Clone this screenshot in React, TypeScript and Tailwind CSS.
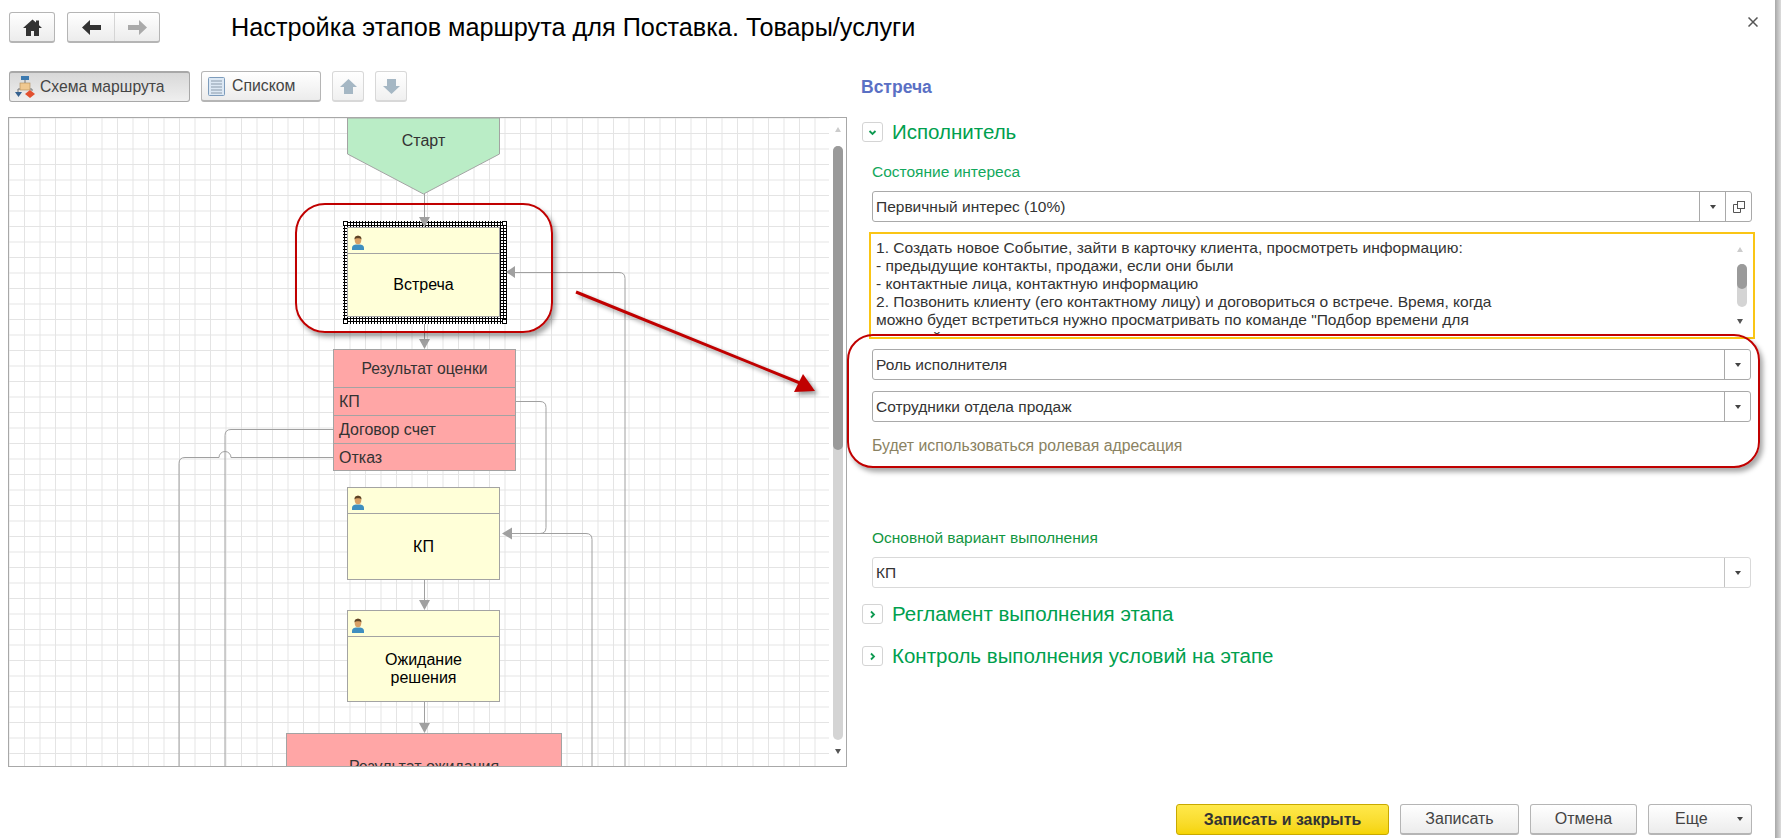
import type { ReactNode } from "react";

function PersonIcon() {
  return (
    <svg width="14" height="16" viewBox="0 0 14 16" className="absolute left-[3px] top-[7px]">
      <path d="M1 15v-2.500C1 10.500 3.500 9.500 5 9.500h4c1.500 0 4 1 4 3V15z" fill="#3f8fc0" />
      <ellipse cx="7" cy="5" rx="3.300" ry="4.200" fill="#d9a066" />
      <path d="M3.500 4.500C3.500 1.500 5 .8 7 .8s3.500.7 3.500 3.700C9.500 2.800 4.500 2.800 3.500 4.500z" fill="#5c4326" />
    </svg>
  );
}

function DownTriangle({ className = "" }: { className?: string }) {
  return <span className={`block w-0 h-0 border-l-[3.500px] border-r-[3.500px] border-t-[4px] border-l-transparent border-r-transparent border-t-[#444] ${className}`} />;
}

function ToolButton({ children, className = "" }: { children: ReactNode; className?: string }) {
  return (
    <div className={`h-[31px] flex items-center rounded-[3px] border border-[#b5b5b5] border-b-[2px] bg-gradient-to-b from-white to-[#ececec] ${className}`}>
      {children}
    </div>
  );
}

function Combo({ text, extra, light }: { text: string; extra?: boolean; light?: boolean }) {
  return (
    <div className={`h-[31px] flex items-stretch rounded-[3px] border bg-white ${light ? "border-[#d9d9d9]" : "border-[#a9a9a9]"}`}>
      <div className="flex-1 flex items-center pl-[3px] text-[15.500px] text-[#333]">{text}</div>
      <div className={`w-[26px] flex items-center justify-center border-l ${light ? "border-[#c4c4c4]" : "border-[#a9a9a9]"}`}>
        <DownTriangle />
      </div>
      {extra && (
        <div className="w-[26px] flex items-center justify-center border-l border-[#a9a9a9]">
          <svg width="12" height="12" viewBox="0 0 12 12" fill="none" stroke="#555" strokeWidth="1">
            <rect x="4.500" y="0.500" width="7" height="7" />
            <path d="M4.500 3.500H.5v8h7V7.500" />
          </svg>
        </div>
      )}
    </div>
  );
}

function GroupHeader({ text, open }: { text: string; open?: boolean }) {
  return (
    <div className="flex items-center h-[20px]">
      <div className="w-[21px] h-[20px] flex items-center justify-center rounded-[3px] border border-[#d4d4d4] bg-white">
        <svg width="9" height="9" viewBox="0 0 9 9" fill="none" stroke="#0f9a52" strokeWidth="1.800">
          {open ? <path d="M1.500 3l3 3 3-3" /> : <path d="M3 1.500l3 3-3 3" />}
        </svg>
      </div>
      <span className="ml-[9px] text-[20.500px] text-[#00a04e] whitespace-nowrap">{text}</span>
    </div>
  );
}

function StepNode({ title, top, height }: { title: ReactNode; top: number; height: number }) {
  return (
    <div
      className="absolute left-[338px] w-[153px] border border-[#a3a3a3] bg-[#ffffd8] flex flex-col"
      style={{ top, height }}
    >
      <div className="relative h-[26px] shrink-0 border-b border-[#a3a3a3]">
        <PersonIcon />
      </div>
      <div className="flex-1 flex items-center justify-center text-center text-[16px] leading-[18px] text-black">{title}</div>
    </div>
  );
}

function OutcomeRow({ text }: { text: string }) {
  return <div className="h-[28px] pl-[5px] flex items-center border-t border-[#a3a3a3] text-[16px] text-[#333]">{text}</div>;
}

function Handle({ className }: { className: string }) {
  return <span className={`absolute w-[5px] h-[5px] bg-white border border-black ${className}`} />;
}

function Diagram() {
  return (
    <div className="relative h-[650px] border border-[#a8a8a8] overflow-hidden bg-white">
      <div className="absolute left-0 top-0 bottom-0 w-[820px] bg-[linear-gradient(to_right,#e4e4e4_1px,transparent_1px),linear-gradient(to_bottom,#e4e4e4_1px,transparent_1px)] bg-[size:15.500px_15.500px] bg-[position:15px_15px]" />

      {/* connectors */}
      <svg width="838" height="650" className="absolute left-0 top-0" fill="none" stroke="#a0a0a0" strokeWidth="1">
        <path d="M415.500 76v30" />
        <path d="M415.500 206v20" />
        <path d="M415.500 461v25" />
        <path d="M415.500 584v25" />
        <path d="M500 154.500h110q6 0 6 6V650" />
        <path d="M507 283.500h24q6 0 6 6v120q0 6-6 6h-34" />
        <path d="M583 650V421.500q0-6-6-6h-80" />
        <path d="M324 311.500H222q-6 0-6 6V650" />
        <path d="M324 339.500H222a6 6 0 0 0-12 0h-34q-6 0-6 6V650" />
      </svg>

      {/* start */}
      <div className="absolute left-[338px] top-0 w-[153px] h-[77px]">
        <svg width="153" height="77" className="absolute inset-0">
          <path d="M.5 0v36L76.500 76 152.500 36V0z" fill="#baedc6" stroke="#a3a3a3" />
        </svg>
        <div className="absolute left-0 right-0 top-[11px] text-center text-[16px] text-[#333]">Старт</div>
      </div>

      {/* selected step */}
      <div className="absolute left-[334px] top-[103px] w-[164px] h-[103px] bg-white bg-[radial-gradient(#000_1px,transparent_1.200px)] bg-[size:3px_3px]">
        <Handle className="left-0 top-0" />
        <Handle className="right-0 top-0" />
        <Handle className="left-0 bottom-0" />
        <Handle className="right-0 bottom-0" />
      </div>
      <StepNode title="Встреча" top={109} height={90} />

      {/* outcome */}
      <div className="absolute left-[324px] top-[231px] w-[183px] h-[122px] bg-[#ffa6a6] border border-[#a3a3a3]">
        <div className="h-[37px] flex items-center justify-center text-[15.700px] text-[#333]">Результат оценки</div>
        <OutcomeRow text="КП" />
        <OutcomeRow text="Договор счет" />
        <OutcomeRow text="Отказ" />
      </div>

      <StepNode title="КП" top={369} height={93} />
      <StepNode title={<span>Ожидание<br />решения</span>} top={492} height={92} />

      <div className="absolute left-[277px] top-[615px] w-[276px] h-[60px] bg-[#ffa6a6] border border-[#a3a3a3] pt-[21px] text-center text-[16px] text-[#333]">
        Результат ожидания
      </div>

      {/* arrowheads lie over the nodes */}
      <svg width="838" height="650" className="absolute left-0 top-0" fill="#a0a0a0">
        <path d="M410 99h11l-5.500 10zM410 221h11l-5.500 10zM410 482h11l-5.500 10zM410 605h11l-5.500 10z" />
        <path d="M506 148v12l-9-6zM503 409.500v12l-10-6z" />
      </svg>

      {/* scrollbar */}
      <div className="absolute left-[826px] top-[9px] w-0 h-0 border-l-[3px] border-r-[3px] border-b-[5px] border-l-transparent border-r-transparent border-b-[#ccc]" />
      <div className="absolute left-[824px] top-[28px] w-[10px] h-[594px] rounded-[5px] bg-[#d4d4d4]">
        <div className="w-full h-[304px] rounded-[5px] bg-[#9a9a9a]" />
      </div>
      <div className="absolute left-[826px] top-[631px] w-0 h-0 border-l-[3px] border-r-[3px] border-t-[5px] border-l-transparent border-r-transparent border-t-[#555]" />
    </div>
  );
}

export default function App() {
  return (
    <div className="relative w-full h-[838px] flex bg-white overflow-hidden font-['Liberation_Sans',Arial,sans-serif]">
      <div className="flex-1 min-w-0 flex flex-col">
        {/* header */}
        <div className="h-[71px] shrink-0 flex items-start pt-[12px] pl-[9px]">
          <ToolButton className="w-[46px] justify-center">
            <svg width="19" height="17" viewBox="0 0 19 17" fill="#333">
              <path d="M9.500.5 0 9h3v8h5v-5h3v5h5V9h3l-3-2.700V1.500h-3v2z" />
            </svg>
          </ToolButton>
          <ToolButton className="ml-[12px] w-[93px]">
            <div className="w-[47px] h-full flex items-center justify-center border-r border-[#d5d5d5]">
              <svg width="19" height="15" viewBox="0 0 19 15" fill="#333">
                <path d="M0 7.500 8 0v5h11v5H8v5z" />
              </svg>
            </div>
            <div className="flex-1 flex items-center justify-center">
              <svg width="19" height="15" viewBox="0 0 19 15" fill="#aaa">
                <path d="M19 7.500 11 0v5H0v5h11v5z" />
              </svg>
            </div>
          </ToolButton>
          <h1 className="ml-[71px] text-[25.250px] leading-[30px] font-normal text-black whitespace-nowrap">
            Настройка этапов маршрута для Поставка. Товары/услуги
          </h1>
        </div>

        {/* body */}
        <div className="h-[733px] shrink-0 flex">
          <div className="w-[847px] shrink-0 pl-[8px]">
            <div className="flex items-start h-[46px] pl-px">
              <div className="h-[31px] w-[181px] flex items-center rounded-[3px] border border-[#a8a8a8] border-t-[2px] bg-gradient-to-b from-[#d8d8d8] to-[#efefef] text-[15.700px] text-[#444]">
                <svg width="20" height="22" viewBox="0 0 20 22" className="ml-[5px]">
                  <rect x="6" y="0" width="8" height="4" fill="#3d7ab0" />
                  <path d="M10 4v4" stroke="#777" />
                  <rect x="5" y="7" width="10" height="7" fill="#f0c890" stroke="#b08a58" strokeWidth=".6" />
                  <path d="M5 13H3v3M15 13h2v2" stroke="#777" fill="none" />
                  <path d="M0 16h7l-3.500 5z" fill="#35618f" />
                  <path d="M15 14l5 4-5 4-5-4z" fill="#e2502f" />
                </svg>
                <span className="ml-[5px]">Схема маршрута</span>
              </div>
              <ToolButton className="ml-[11px] w-[120px]">
                <svg width="17" height="19" viewBox="0 0 17 19" className="ml-[6px]">
                  <rect x=".5" y=".5" width="16" height="18" rx="1" fill="#dce8f4" stroke="#7d9cbc" />
                  <path d="M3 4h11M3 7h11M3 10h11M3 13h11M3 16h11" stroke="#8a9aaa" />
                </svg>
                <span className="ml-[7px] text-[15.800px] text-[#444]">Списком</span>
              </ToolButton>
              <div className="ml-[11px] w-[32px] h-[31px] flex items-center justify-center rounded-[3px] border border-[#d8d8d8] border-b-[2px] bg-gradient-to-b from-white to-[#f0f0f0]">
                <svg width="17" height="15" viewBox="0 0 17 15" fill="#a5b7c4">
                  <path d="M8.500 0 17 8h-4v7H4V8H0z" />
                </svg>
              </div>
              <div className="ml-[11px] w-[32px] h-[31px] flex items-center justify-center rounded-[3px] border border-[#d8d8d8] border-b-[2px] bg-gradient-to-b from-white to-[#f0f0f0]">
                <svg width="17" height="15" viewBox="0 0 17 15" fill="#a5b7c4">
                  <path d="M8.500 15 17 7h-4V0H4v7H0z" />
                </svg>
              </div>
            </div>
            <Diagram />
          </div>

          <div className="flex-1 min-w-0 pl-[15px] pr-[24px]">
            <div className="h-[32px] -ml-px flex items-center text-[17.500px] font-bold text-[#5a70c4]">Встреча</div>
            <div className="mt-[19px]">
              <GroupHeader text="Исполнитель" open />
            </div>
            <div className="pl-[10px]">
              <div className="mt-[20px] h-[20px] flex items-center text-[15.500px] text-[#12a85c]">Состояние интереса</div>
              <div className="mt-[9px] mr-[-1px]">
                <Combo text="Первичный интерес (10%)" extra />
              </div>
              <div className="relative mt-[10px] ml-[-3px] mr-[-4px] h-[107px] border-2 border-[#fac515] pl-[5px] text-[15.550px] leading-[18px] text-[#333]">
                <div className="h-[100px] pt-[5px] overflow-hidden">
                  <p className="whitespace-nowrap">1. Создать новое Событие, зайти в карточку клиента, просмотреть информацию:</p>
                  <p className="whitespace-nowrap">- предыдущие контакты, продажи, если они были</p>
                  <p className="whitespace-nowrap">- контактные лица, контактную информацию</p>
                  <p className="whitespace-nowrap">2. Позвонить клиенту (его контактному лицу) и договориться о встрече. Время, когда</p>
                  <p className="whitespace-nowrap">можно будет встретиться нужно просматривать по команде "Подбор времени для</p>
                  <p className="whitespace-nowrap">встречей</p>
                </div>
                <div className="absolute right-[10px] top-[13px] w-0 h-0 border-l-[3px] border-r-[3px] border-b-[5px] border-l-transparent border-r-transparent border-b-[#ccc]" />
                <div className="absolute right-[6px] top-[30px] w-[10px] h-[43px] rounded-[5px] bg-[#d4d4d4]">
                  <div className="h-[25px] rounded-[5px] bg-[#9a9a9a]" />
                </div>
                <div className="absolute right-[10px] top-[85px] w-0 h-0 border-l-[3px] border-r-[3px] border-t-[5px] border-l-transparent border-r-transparent border-t-[#555]" />
              </div>
              <div className="mt-[10px]">
                <Combo text="Роль исполнителя" />
              </div>
              <div className="mt-[11px]">
                <Combo text="Сотрудники отдела продаж" />
              </div>
              <div className="mt-[15px] h-[18px] flex items-center text-[15.800px] text-[#8a8262]">Будет использоваться ролевая адресация</div>
              <div className="mt-[74px] h-[18px] flex items-center text-[15.500px] text-[#12963f]">Основной вариант выполнения</div>
              <div className="mt-[10px]">
                <Combo text="КП" light />
              </div>
            </div>
            <div className="mt-[16px]">
              <GroupHeader text="Регламент выполнения этапа" />
            </div>
            <div className="mt-[22px]">
              <GroupHeader text="Контроль выполнения условий на этапе" />
            </div>
          </div>
        </div>

        {/* footer */}
        <div className="flex justify-end items-start pr-[23px] gap-[11px]">
          <div className="w-[213px] h-[31px] flex items-center justify-center rounded-[3px] border border-[#c8a900] bg-gradient-to-b from-[#ffe94a] to-[#f5d400] text-[15.900px] font-bold text-[#333]">
            Записать и закрыть
          </div>
          <ToolButton className="w-[119px] justify-center text-[16px] text-[#444]">Записать</ToolButton>
          <ToolButton className="w-[107px] justify-center text-[16px] text-[#444]">Отмена</ToolButton>
          <ToolButton className="w-[104px] text-[16px] text-[#444]">
            <span className="ml-[26px] flex-1">Еще</span>
            <DownTriangle className="mr-[8px]" />
          </ToolButton>
        </div>
      </div>

      {/* window edge */}
      <div className="w-[6px] shrink-0 bg-gradient-to-r from-[#a8a8a8] to-[#dcdcdc]" />

      {/* close */}
      <svg width="10" height="10" viewBox="0 0 10 10" className="absolute left-[1748px] top-[17px]" stroke="#555" strokeWidth="1.500">
        <path d="M.5.5l9 9M9.500.5l-9 9" />
      </svg>

      {/* annotations drawn over the page */}
      <div className="absolute left-[295px] top-[203px] w-[258px] h-[130px] rounded-[30px] border-2 border-[#c00000] shadow-[3px_4px_5px_rgba(0,0,0,0.35)]" />
      <div className="absolute left-[847px] top-[334px] w-[913px] h-[134px] rounded-[26px] border-2 border-[#c00000] shadow-[3px_4px_5px_rgba(0,0,0,0.35)]" />
      <svg width="260" height="120" viewBox="0 0 260 120" className="absolute left-[570px] top-[285px] drop-shadow-[3px_3px_2px_rgba(0,0,0,0.4)]">
        <path d="M6 7 230 98" stroke="#c00000" strokeWidth="3" />
        <path d="M245 106 224 107 233 89z" fill="#c00000" />
      </svg>
    </div>
  );
}
